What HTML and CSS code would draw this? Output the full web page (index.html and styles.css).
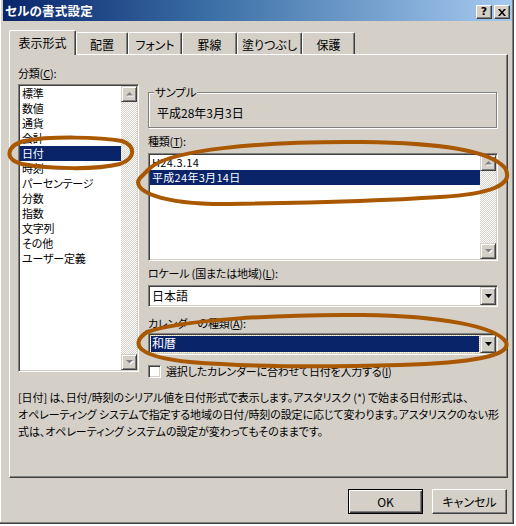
FILE: index.html
```html
<!DOCTYPE html>
<html lang="ja">
<head>
<meta charset="utf-8">
<title>セルの書式設定</title>
<link rel="stylesheet" href="styles.css">
</head>
<body>
<div class="window">
  <div class="titlebar">
    <span class="title">セルの書式設定</span>
    <div class="tbtns">
      <span class="tbtn q">?</span>
      <span class="tbtn"><svg width="8" height="7" viewBox="0 0 8 7"><path d="M0 0h2l2 2.5 2-2.5h2L5 3.5 8 7H6L4 4.5 2 7H0l3-3.5z" fill="#000"/></svg></span>
    </div>
  </div>

  <div class="tabs">
    <div class="tab active">表示形式</div>
    <div class="tab t-haichi">配置</div>
    <div class="tab t-font">フォント</div>
    <div class="tab t-keisen">罫線</div>
    <div class="tab t-nuri">塗りつぶし</div>
    <div class="tab t-hogo">保護</div>
  </div>

  <div class="panel">
    <div class="main">
      <div class="leftcol">
        <div class="lbl">分類(<u>C</u>):</div>
        <div class="listbox cat">
          <ul class="items">
            <li>標準</li>
            <li>数値</li>
            <li>通貨</li>
            <li>会計</li>
            <li class="sel">日付</li>
            <li>時刻</li>
            <li>パーセンテージ</li>
            <li>分数</li>
            <li>指数</li>
            <li>文字列</li>
            <li>その他</li>
            <li>ユーザー定義</li>
          </ul>
          <div class="vscroll">
            <div class="sbtn"><svg width="9" height="6" viewBox="0 0 9 6"><path d="M4.5 1 8 4.5H1z" fill="#fff" transform="translate(1 1)"/><path d="M4.5 1 8 4.5H1z" fill="#808080"/></svg></div>
            <div class="track"></div>
            <div class="sbtn"><svg width="9" height="6" viewBox="0 0 9 6"><path d="M1 1h7L4.5 4.5z" fill="#fff" transform="translate(1 1)"/><path d="M1 1h7L4.5 4.5z" fill="#808080"/></svg></div>
          </div>
        </div>
      </div>

      <div class="rightcol">
        <div class="group">
          <span class="legend">サンプル</span>
          <div class="sample">平成28年3月3日</div>
        </div>

        <div class="lbl l-type">種類(<u>T</u>):</div>
        <div class="listbox types">
          <ul class="items">
            <li>H24.3.14</li>
            <li class="sel">平成24年3月14日</li>
          </ul>
          <div class="vscroll">
            <div class="sbtn"><svg width="9" height="6" viewBox="0 0 9 6"><path d="M4.5 1 8 4.5H1z" fill="#fff" transform="translate(1 1)"/><path d="M4.5 1 8 4.5H1z" fill="#808080"/></svg></div>
            <div class="track"></div>
            <div class="sbtn"><svg width="9" height="6" viewBox="0 0 9 6"><path d="M1 1h7L4.5 4.5z" fill="#fff" transform="translate(1 1)"/><path d="M1 1h7L4.5 4.5z" fill="#808080"/></svg></div>
          </div>
        </div>

        <div class="lbl l-locale">ロケール (国または地域)(<u>L</u>):</div>
        <div class="combo">
          <div class="ctext">日本語</div>
          <div class="sbtn drop"><svg width="7" height="4" viewBox="0 0 7 4"><path d="M0 0h7L3.5 4z" fill="#000"/></svg></div>
        </div>

        <div class="lbl l-cal">カレンダーの種類(<u>A</u>):</div>
        <div class="combo">
          <div class="ctext focus"><span class="csel">和暦</span></div>
          <div class="sbtn drop"><svg width="7" height="4" viewBox="0 0 7 4"><path d="M0 0h7L3.5 4z" fill="#000"/></svg></div>
        </div>

        <div class="check"><span class="box"></span><span>選択したカレンダーに合わせて日付を入力する(<u>I</u>)</span></div>
      </div>
    </div>

    <p class="desc">[日付] は、日付/時刻のシリアル値を日付形式で表示します。アスタリスク (*) で始まる日付形式は、<br>オペレーティング システムで指定する地域の日付/時刻の設定に応じて変わります。アスタリスクのない形<br>式は、オペレーティング システムの設定が変わってもそのままです。</p>
  </div>

  <div class="buttons">
    <div class="btn default">OK</div>
    <div class="btn">キャンセル</div>
  </div>

  <svg class="marks" width="516" height="526" viewBox="0 0 516 526">
    <path d="M24 141 C50 136 100 137 122 141 C136 146 136 158 120 164 C95 170 50 169 22 164 C4 160 6 146 24 141 Z"/>
    <path d="M150 168 C170 150 260 141 363 142 C440 143 490 150 505 168 C515 185 490 194 440 197 C380 201 300 203 230 204 C160 205 130 190 140 178 Z"/>
    <path d="M147 332 C180 320 280 314 363 315 C440 316 495 326 506 342 C512 356 470 363 400 365 C330 367 250 367 190 362 C140 357 128 345 147 332 Z"/>
  </svg>
</div>
</body>
</html>
```

FILE: styles.css
```css
html, body {
  margin: 0;
  padding: 0;
  background: #ffffff;
}

body {
  font-family: "Noto Sans CJK JP", "Noto Sans", sans-serif;
  font-size: 11px;
  letter-spacing: -0.2px;
  color: #000;
  font-feature-settings: "palt";
}

u {
  text-decoration: underline;
  text-underline-offset: 1px;
}

.window {
  position: relative;
  width: 514px;
  height: 524px;
  box-sizing: border-box;
  background: #d4d0c8;
  padding: 0 1px 0 3px;
  border-right: 1px solid #404040;
  border-bottom: 1px solid #404040;
  box-shadow: inset -1px -1px 0 #808080, inset 1px 0 0 #ffffff;
}

/* title bar */
.titlebar {
  height: 21px;
  display: flex;
  align-items: flex-start;
  background: linear-gradient(to right, #0a246a 0%, #3a6ea5 40%, #a6caf0 100%);
}

.title {
  color: #fff;
  font-weight: bold;
  font-size: 12.5px;
  line-height: 21px;
  padding-left: 2px;
  letter-spacing: 0.2px;
}

.tbtns {
  margin-left: auto;
  margin-right: 2px;
  margin-top: 5px;
  display: flex;
  gap: 2px;
}

.tbtn {
  width: 16px;
  height: 14px;
  box-sizing: border-box;
  background: #d4d0c8;
  border: 1px solid;
  border-color: #fff #404040 #404040 #fff;
  box-shadow: inset -1px -1px 0 #808080;
  display: flex;
  align-items: center;
  justify-content: center;
}

.tbtn.q {
  font-family: "DejaVu Sans", sans-serif;
  font-weight: bold;
  font-size: 11px;
  line-height: 12px;
  letter-spacing: 0;
}

/* tabs */
.tabs {
  display: flex;
  align-items: flex-end;
  height: 24px;
  margin: 9px 0 0 6px;
  position: relative;
  z-index: 2;
  font-size: 12px;
  letter-spacing: 0;
}

.tab {
  height: 22px;
  box-sizing: border-box;
  display: flex;
  align-items: center;
  justify-content: center;
  border-top: 1px solid #fff;
  border-left: 1px solid #fff;
  border-right: 1px solid #404040;
  box-shadow: inset -1px 0 0 #808080;
  border-top-left-radius: 2px;
  border-top-right-radius: 2px;
  padding-top: 1px;
}

.tab.active {
  width: 67px;
  height: 25px;
  margin-bottom: -1px;
  background: #d4d0c8;
  padding-top: 0;
  padding-bottom: 1px;
}

.t-haichi { width: 52px; }
.t-font { width: 54px; }
.t-keisen { width: 55px; }
.t-nuri { width: 65px; }
.t-hogo { width: 53px; }

/* panel */
.panel {
  margin-left: 6px;
  width: 499px;
  height: 424px;
  box-sizing: border-box;
  border-top: 1px solid #fff;
  border-left: 1px solid #fff;
  border-right: 1px solid #404040;
  border-bottom: 1px solid #404040;
  box-shadow: inset -1px -1px 0 #808080;
  padding: 11px 0 0 8px;
  position: relative;
  z-index: 1;
}

.main {
  display: flex;
  gap: 9px;
  align-items: flex-start;
}

.leftcol {
  width: 121px;
}

.rightcol {
  width: 350px;
  display: flex;
  flex-direction: column;
}

.lbl {
  line-height: 14px;
  height: 14px;
  white-space: nowrap;
}

/* list boxes */
.listbox {
  display: flex;
  box-sizing: border-box;
  background: #fff;
  border: 1px solid;
  border-color: #808080 #fff #fff #808080;
  padding: 1px;
  box-shadow: inset 1px 1px 0 #404040, inset -1px -1px 0 #d4d0c8;
}

.listbox.cat {
  margin-top: 4px;
  width: 121px;
  height: 288px;
}

.listbox.types {
  margin-top: 5px;
  width: 350px;
  height: 108px;
  letter-spacing: 0.3px;
}

.items {
  list-style: none;
  margin: 0;
  padding: 0;
  flex: 1;
  background: #fff;
  overflow: hidden;
}

.items li {
  height: 15px;
  line-height: 15px;
  padding-left: 2px;
  white-space: nowrap;
}

.items li.sel {
  background: #0a246a;
  color: #fff;
}

.vscroll {
  width: 16px;
  display: flex;
  flex-direction: column;
}

.track {
  flex: 1;
  background: repeating-conic-gradient(#ffffff 0% 25%, #d4d0c8 0% 50%) 0 0 / 2px 2px;
}

.sbtn {
  width: 16px;
  height: 16px;
  box-sizing: border-box;
  background: #d4d0c8;
  border: 1px solid;
  border-color: #d4d0c8 #404040 #404040 #d4d0c8;
  box-shadow: inset 1px 1px 0 #fff, inset -1px -1px 0 #808080;
  display: flex;
  align-items: center;
  justify-content: center;
}

.sbtn svg {
  display: block;
}

/* group box */
.group {
  position: relative;
  margin-top: 26px;
  width: 349px;
  height: 36px;
  box-sizing: border-box;
  border: 1px solid #808080;
  box-shadow: inset 1px 1px 0 #fff, 1px 1px 0 #fff;
  padding: 13px 0 0 8px;
}

.legend {
  position: absolute;
  top: -8px;
  left: 5px;
  padding: 0 1px;
  background: #d4d0c8;
  line-height: 14px;
  font-size: 11.5px;
}

.sample {
  line-height: 14px;
  font-size: 12px;
  letter-spacing: 0;
}

.l-type { margin-top: 6px; }
.l-locale { margin-top: 5px; }
.l-cal { margin-top: 9px; }

/* combos */
.combo {
  display: flex;
  width: 350px;
  height: 22px;
  box-sizing: border-box;
  background: #fff;
  border: 1px solid;
  border-color: #808080 #fff #fff #808080;
  padding: 1px;
  box-shadow: inset 1px 1px 0 #404040, inset -1px -1px 0 #d4d0c8;
  margin-top: 5px;
  font-size: 12px;
  letter-spacing: 0;
}

.l-cal + .combo {
  margin-top: 3px;
}

.ctext {
  flex: 1;
  line-height: 18px;
  padding-left: 2px;
}

.ctext.focus {
  padding: 1px;
  display: flex;
}

.csel {
  flex: 1;
  background: #0a246a;
  color: #fff;
  line-height: 14px;
  padding-left: 1px;
  outline: 1px dotted #e0d8a0;
}

.sbtn.drop {
  height: 18px;
}

/* checkbox */
.check {
  margin-top: 10px;
  display: flex;
  align-items: center;
  gap: 5px;
  height: 13px;
  line-height: 13px;
}

.box {
  width: 13px;
  height: 13px;
  box-sizing: border-box;
  background: #fff;
  border: 1px solid;
  border-color: #808080 #fff #fff #808080;
  box-shadow: inset 1px 1px 0 #404040, inset -1px -1px 0 #d4d0c8;
}

/* description */
.desc {
  margin: 11px 0 0 0;
  font-size: 11px;
  letter-spacing: -0.1px;
  line-height: 17px;
  white-space: nowrap;
}

/* buttons */
.buttons {
  display: flex;
  justify-content: flex-end;
  gap: 9px;
  margin: 11px 5px 0 0;
  font-size: 12px;
  letter-spacing: 0;
}

.btn {
  width: 75px;
  height: 25px;
  box-sizing: border-box;
  display: flex;
  align-items: center;
  justify-content: center;
  background: #d4d0c8;
  border: 1px solid;
  border-color: #fff #404040 #404040 #fff;
  box-shadow: inset -1px -1px 0 #808080;
}

.btn.default {
  border-color: #000;
  box-shadow: inset 1px 1px 0 #fff, inset -1px -1px 0 #404040, inset -2px -2px 0 #808080;
}

/* hand-drawn marks */
.marks {
  position: absolute;
  left: 0;
  top: 0;
  z-index: 5;
  pointer-events: none;
}

.marks path {
  fill: none;
  stroke: #a95800;
  stroke-width: 4;
  stroke-linejoin: round;
}
```
